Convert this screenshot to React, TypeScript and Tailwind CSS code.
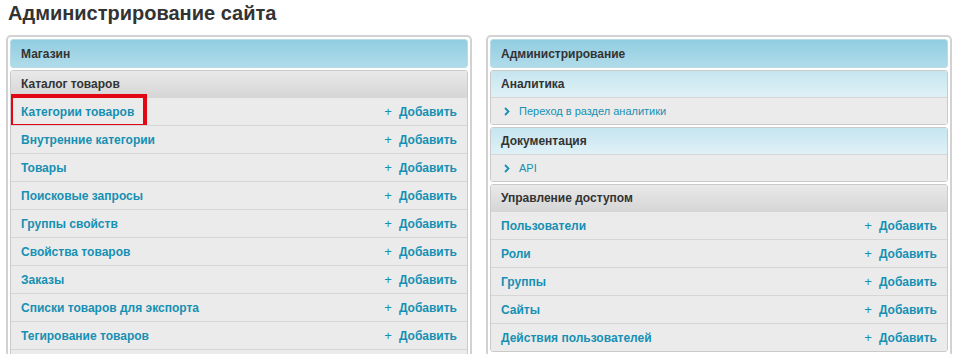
import React from "react";

const shop = [
  "Категории товаров",
  "Внутренние категории",
  "Товары",
  "Поисковые запросы",
  "Группы свойств",
  "Свойства товаров",
  "Заказы",
  "Списки товаров для экспорта",
  "Тегирование товаров",
  "",
];

const access = ["Пользователи", "Роли", "Группы", "Сайты", "Действия пользователей"];

function PanelHeader({ title }: { title: string }) {
  return (
    <div className="rounded-[3px] border border-[#b9dbe6] bg-gradient-to-b from-[#91cde0] to-[#b0dcea] h-[29px] flex items-center px-[10px] text-[12px] font-bold text-[#333]">
      {title}
    </div>
  );
}

function Row({ label, add = true, highlight = false }: { label: string; add?: boolean; highlight?: boolean }) {
  return (
    <div className="relative h-[28px] border-t border-[#d6d6d6] bg-[#ebebeb] flex items-center justify-between px-[10px]">
      <span className="text-[12px] font-bold text-[#1690b3]">{label}</span>
      {add && (
        <span className="flex items-center gap-[7px] text-[12px] font-bold text-[#1690b3]">
          <span className="font-normal text-[13px] leading-none">+</span>
          Добавить
        </span>
      )}
      {highlight && (
        <div className="absolute left-[-2px] top-[-4px] w-[138px] h-[34px] border-[4px] border-[#e30613]" />
      )}
    </div>
  );
}

function LinkRow({ label }: { label: string }) {
  return (
    <div className="h-[27px] border-t border-[#d6d6d6] bg-[#ebebeb] flex items-center px-[10px] gap-[8px] text-[11px] text-[#1690b3]">
      <svg width="8" height="9" viewBox="0 0 8 9" className="ml-[2px]">
        <path d="M2 1l3.5 3.5L2 8" fill="none" stroke="#1690b3" strokeWidth="1.8" />
      </svg>
      <span>{label}</span>
    </div>
  );
}

function Section({ title, tone, children }: { title: string; tone: "gray" | "blue"; children: React.ReactNode }) {
  return (
    <div className="rounded-[3px] border border-[#cacaca] overflow-hidden">
      <div
        className={`h-[26px] flex items-center px-[10px] text-[12px] font-bold text-[#333] ${
          tone === "gray"
            ? "bg-gradient-to-b from-[#e9e9e9] to-[#d6d6d6]"
            : "bg-gradient-to-b from-[#c5e5ef] to-[#e0f1f7]"
        }`}
      >
        {title}
      </div>
      {children}
    </div>
  );
}

export default function App() {
  return (
    <div className="h-[354px] overflow-hidden bg-white" style={{ fontFamily: '"Liberation Sans", Arial, sans-serif' }}>
      <h1 className="pl-[8px] pt-[2px] h-[35px] text-[20px] font-bold text-[#333] leading-[22px]">
        Администрирование сайта
      </h1>
      <div className="flex gap-[14px] px-[6px]">
        <div className="w-[466px] rounded-[5px] border-2 border-[#d2d2d2] p-[2px] flex flex-col gap-[2px]">
          <PanelHeader title="Магазин" />
          <Section title="Каталог товаров" tone="gray">
            {shop.map((s, i) => (
              <Row key={i} label={s} add={s !== ""} highlight={i === 0} />
            ))}
          </Section>
        </div>
        <div className="w-[466px] rounded-[5px] border-2 border-[#d2d2d2] p-[2px] flex flex-col gap-[2px]">
          <PanelHeader title="Администрирование" />
          <Section title="Аналитика" tone="blue">
            <LinkRow label="Переход в раздел аналитики" />
          </Section>
          <Section title="Документация" tone="blue">
            <LinkRow label="API" />
          </Section>
          <Section title="Управление доступом" tone="gray">
            {access.map((s) => (
              <Row key={s} label={s} />
            ))}
          </Section>
        </div>
      </div>
    </div>
  );
}
